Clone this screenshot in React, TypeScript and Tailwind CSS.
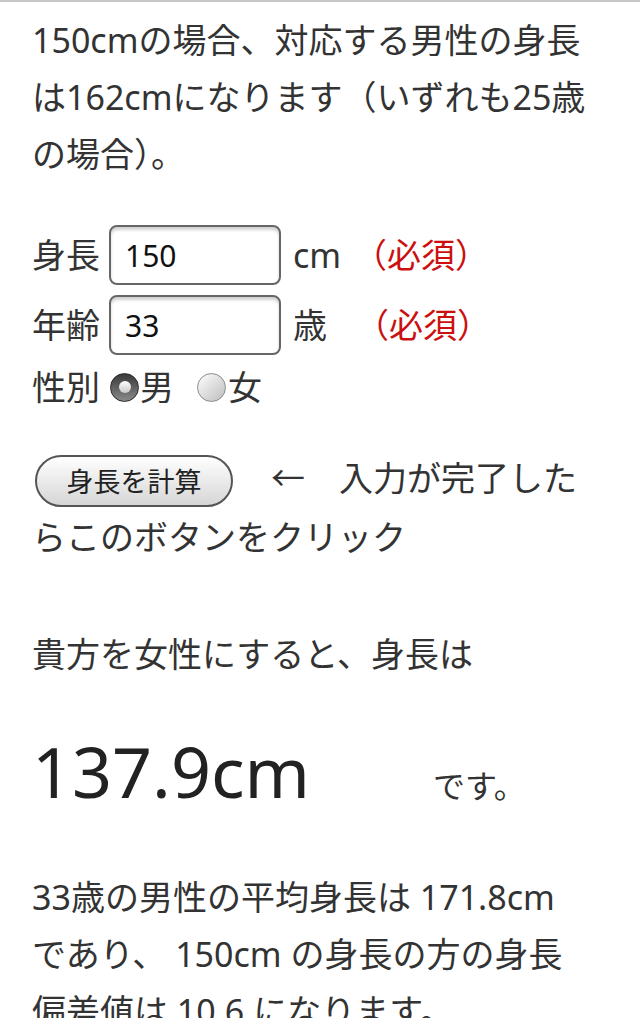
import { useState } from 'react';

export default function App() {
  const [height, setHeight] = useState('150');
  const [age, setAge] = useState('33');
  const [sex, setSex] = useState<'male' | 'female'>('male');

  const Radio = ({ checked, onClick }: { checked: boolean; onClick: () => void }) => (
    <span
      onClick={onClick}
      className={
        checked
          ? 'flex shrink-0 items-center justify-center w-[29px] h-[29px] rounded-full border border-[#2a2a2a] bg-gradient-to-b from-[#3a3a3a] to-[#8a8a8a]'
          : 'flex shrink-0 items-center justify-center w-[29px] h-[29px] rounded-full border border-[#8a8a8a] bg-gradient-to-br from-white to-[#bdbdbd]'
      }
    >
      {checked && <span className="w-[12px] h-[12px] rounded-full bg-gradient-to-b from-white to-[#c8c8c8]"></span>}
    </span>
  );

  return (
    <div className="min-h-screen bg-white border-t-2 border-[#c8c8c8] px-[32px] pt-[10px] text-[#333] text-[34px] leading-[57px] font-['Noto_Sans','Noto_Sans_CJK_JP',sans-serif]">
      <p>
        150cmの場合、対応する男性の身長<br />
        は162cmになります（いずれも25歳<br />
        の場合）。
      </p>

      {/* form */}
      <div className="mt-[42px]">
        <div className="flex items-center h-[60px]">
          <span className="w-[68px]">身長</span>
          <input
            value={height}
            onChange={(e) => setHeight(e.target.value)}
            className="ml-[9px] w-[172px] h-[60px] rounded-[8px] border-2 border-[#666] pl-[14px] text-[30px] text-[#111] shadow-[inset_0_3px_3px_rgba(0,0,0,0.18)] focus:outline-none"
          />
          <span className="ml-[12px] w-[60px]">cm</span>
          <span className="text-[#cc1010]">（必須）</span>
        </div>
        <div className="flex items-center h-[60px] mt-[10px]">
          <span className="w-[68px]">年齢</span>
          <input
            value={age}
            onChange={(e) => setAge(e.target.value)}
            className="ml-[9px] w-[172px] h-[60px] rounded-[8px] border-2 border-[#666] pl-[14px] text-[30px] text-[#111] shadow-[inset_0_3px_3px_rgba(0,0,0,0.18)] focus:outline-none"
          />
          <span className="ml-[12px] w-[62px]">歳</span>
          <span className="text-[#cc1010]">（必須）</span>
        </div>
        <div className="flex items-center h-[44px] mt-[10px]">
          <span className="w-[68px]">性別</span>
          <span className="ml-[10px]">
            <Radio checked={sex === 'male'} onClick={() => setSex('male')} />
          </span>
          <span className="ml-[1px]">男</span>
          <span className="ml-[23px]">
            <Radio checked={sex === 'female'} onClick={() => setSex('female')} />
          </span>
          <span className="ml-[2px]">女</span>
        </div>
      </div>

      {/* button */}
      <div className="mt-[46px] flex items-center h-[52px]">
        <button className="ml-[3px] w-[198px] h-[52px] rounded-full border-2 border-[#555] bg-gradient-to-b from-white to-[#d6d6d6] text-[27px] leading-none text-[#222]">
          身長を計算
        </button>
        <span className="ml-[4px] pb-[6px]">　←　入力が完了した</span>
      </div>
      <div className="mt-[2px]">らこのボタンをクリック</div>

      {/* result */}
      <div className="mt-[60px]">貴方を女性にすると、身長は</div>
      <div className="mt-[53px] flex items-baseline">
        <span className="w-[401px] text-[70px] leading-[70px] text-[#222]">137.9cm</span>
        <span className="text-[32px] leading-[57px]">です。</span>
      </div>

      <p className="mt-[55px]">
        33歳の男性の平均身長は 171.8cm<br />
        であり、 150cm の身長の方の身長<br />
        偏差値は 10.6 になります。
      </p>
    </div>
  );
}
